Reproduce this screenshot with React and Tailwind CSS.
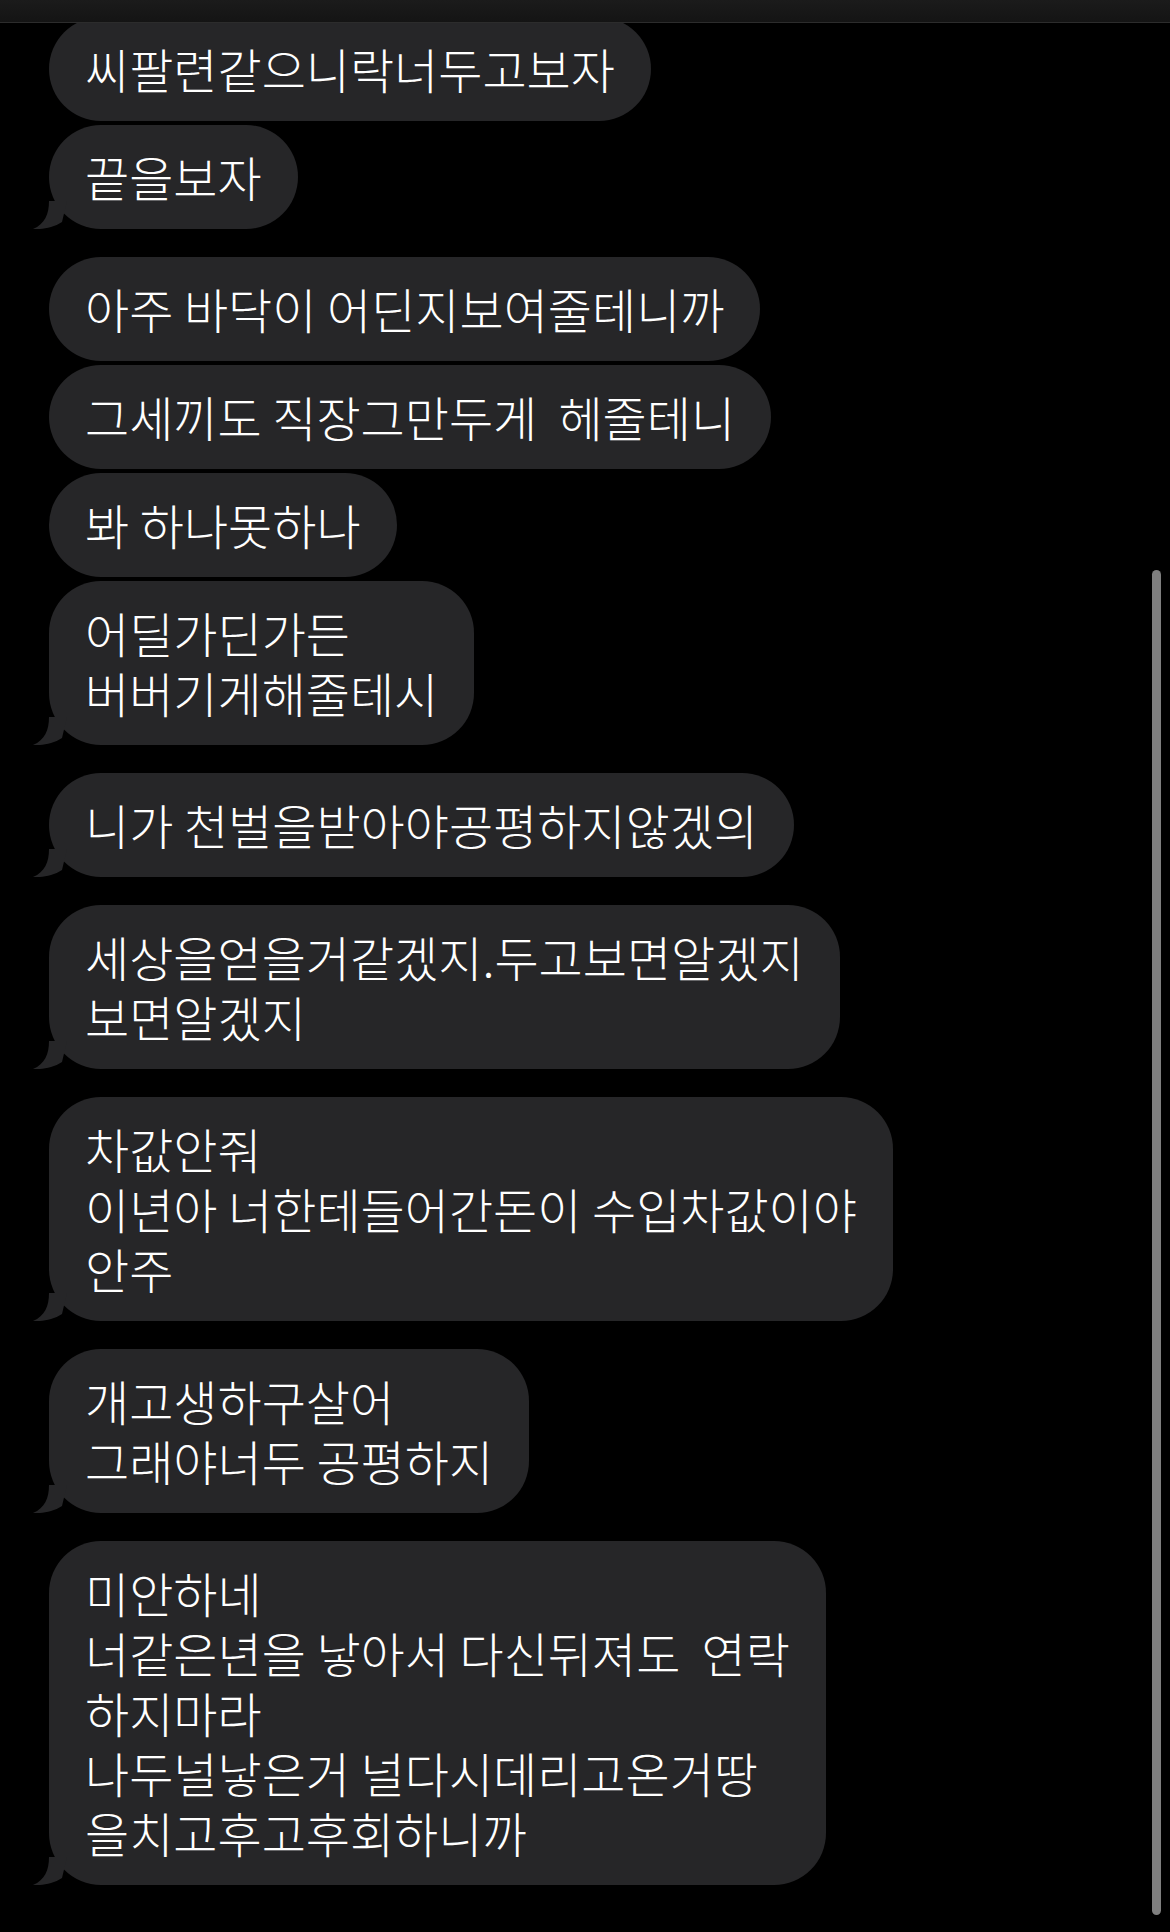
import React from "react";

// incoming thread, grouped bubbles; `tail` marks the last bubble of a group
const messages = [
  { lines: ["씨팔련같으니락너두고보자"] },
  { lines: ["끝을보자"], tail: true },
  { lines: ["아주 바닥이 어딘지보여줄테니까"], first: true },
  { lines: ["그세끼도 직장그만두게  헤줄테니"] },
  { lines: ["봐 하나못하나"] },
  { lines: ["어딜가딘가든", "버버기게해줄테시"], tail: true },
  { lines: ["니가 천벌을받아야공평하지않겠의"], tail: true, first: true },
  { lines: ["세상을얻을거같겠지.두고보면알겠지", "보면알겠지"], tail: true, first: true },
  { lines: ["차값안줘", "이년아 너한테들어간돈이 수입차값이야", "안주"], tail: true, first: true },
  { lines: ["개고생하구살어", "그래야너두 공평하지"], tail: true, first: true },
  {
    lines: [
      "미안하네",
      "너같은년을 낳아서 다신뒤져도  연락",
      "하지마라",
      "나두널낳은거 널다시데리고온거땅",
      "을치고후고후회하니까",
    ],
    tail: true,
    first: true,
  },
];

const Tail = () => (
  <svg
    className="absolute left-[-16px] bottom-0 w-[34px] h-[28px]"
    viewBox="0 0 34 28"
  >
    <path d="M16 0 C16 13 12 23 0 28 C8 28.6 20 27 29 21 L34 0 Z" fill="#262628" />
  </svg>
);

const Bubble = ({ lines, tail, first }) => (
  <div
    className={
      first
        ? "relative mt-[28px] w-fit rounded-[52px] bg-[#262628] px-[36px] pt-[21px] pb-[23px]"
        : "relative mt-[4px] w-fit rounded-[52px] bg-[#262628] px-[36px] pt-[21px] pb-[23px]"
    }
  >
    {tail && <Tail />}
    {lines.map((line, i) => (
      <div
        key={i}
        className="whitespace-pre text-[48px] font-light leading-[60px] text-white"
      >
        {line}
      </div>
    ))}
  </div>
);

export default function App() {
  return (
    <div className="relative h-[1932px] w-full overflow-hidden bg-black font-['Noto_Sans_CJK_KR','Noto_Sans',sans-serif]">
      <div className="flex flex-col items-start pl-[49px] pt-[13px]">
        {messages.map((m, i) => (
          <Bubble key={i} {...m} />
        ))}
      </div>

      {/* nav bar edge */}
      <div className="absolute inset-x-0 top-0 h-[23px] border-b border-[#2c2c2c] bg-gradient-to-b from-[#1b1b1b] to-[#141414]" />

      {/* scroll indicator */}
      <div className="absolute right-[9px] top-[570px] h-[1345px] w-[9px] rounded-full bg-[#7f7f7f]" />
    </div>
  );
}
